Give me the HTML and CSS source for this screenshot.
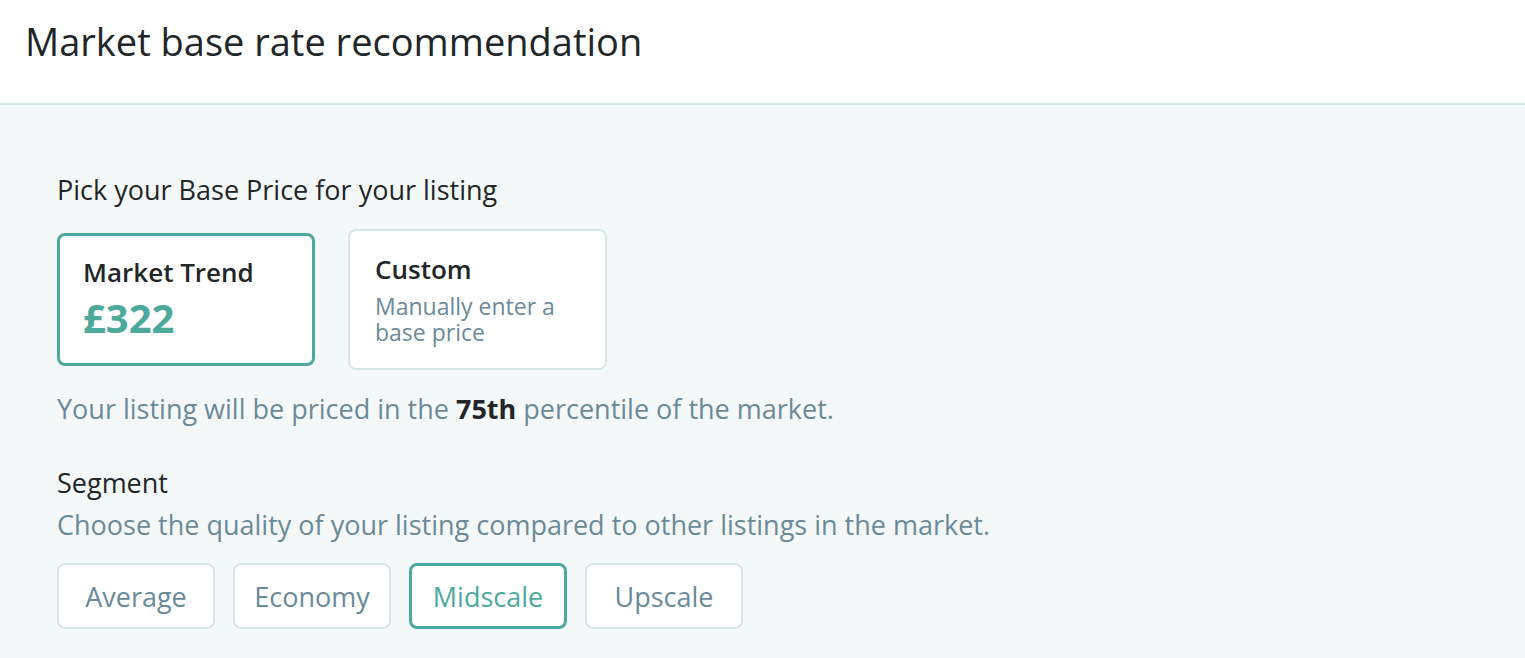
FILE: index.html
```html
<!DOCTYPE html>
<html lang="en">
<head>
  <meta charset="UTF-8" />
  <title>Market base rate recommendation</title>
  <link rel="stylesheet" href="styles.css">
</head>
<body>
  <header class="page-header">
    <h1>Market base rate recommendation</h1>
  </header>

  <main class="content">
    <section class="base-price">
      <p class="label">Pick your Base Price for your listing</p>
      <div class="price-options">
        <button class="price-card selected">
          <span class="card-title">Market Trend</span>
          <span class="card-price">£322</span>
        </button>
        <button class="price-card">
          <span class="card-title">Custom</span>
          <span class="card-note">Manually enter a base price</span>
        </button>
      </div>
      <p class="hint">Your listing will be priced in the <strong>75th</strong> percentile of the market.</p>
    </section>

    <section class="segment">
      <p class="label">Segment</p>
      <p class="hint">Choose the quality of your listing compared to other listings in the market.</p>
      <div class="segment-options">
        <button class="segment-btn">Average</button>
        <button class="segment-btn">Economy</button>
        <button class="segment-btn selected">Midscale</button>
        <button class="segment-btn">Upscale</button>
      </div>
    </section>
  </main>
</body>
</html>
```

FILE: styles.css
```css
* {
  margin: 0;
  padding: 0;
  box-sizing: border-box;
}
body, html {
  height: 100%;
  overflow: hidden;
}
body {
  font-family: 'Open Sans', 'Noto Sans', sans-serif;
  background: #f5f8f8;
  color: #222629;
}

.page-header {
  background: #fff;
  height: 105px;
  border-bottom: 2px solid #d7e5e5;
  padding: 15px 25px 0;
}
.page-header h1 {
  font-size: 38px;
  font-weight: 400;
  line-height: 52px;
}

.content {
  padding: 67px 57px 0;
}

.label {
  font-size: 27px;
  line-height: 36px;
  font-weight: 500;
}

.hint {
  font-size: 27px;
  line-height: 36px;
  color: #6a8a99;
}
.hint strong {
  color: #222629;
  font-weight: 700;
}

.price-options {
  display: flex;
  gap: 33px;
  margin: 21px 0;
  align-items: center;
}

.price-card {
  font-family: inherit;
  background: #fff;
  border: 2px solid #d6e6e6;
  border-radius: 8px;
  width: 259px;
  height: 141px;
  padding: 21px 25px;
  display: flex;
  flex-direction: column;
  align-items: flex-start;
  text-align: left;
  cursor: pointer;
}
.price-card.selected {
  width: 258px;
  height: 133px;
  border: 3px solid #4ea99d;
  padding: 19px 23px;
}

.card-title {
  font-size: 26px;
  font-weight: 600;
  line-height: 34px;
  color: #222629;
}
.card-price {
  font-size: 40px;
  font-weight: 700;
  line-height: 46px;
  color: #4ea99d;
  margin-top: 6px;
}
.card-note {
  font-size: 23px;
  line-height: 26px;
  color: #6a8a99;
  margin-top: 7px;
}

.segment {
  margin-top: 38px;
}
.segment .hint {
  margin-top: 6px;
}

.segment-options {
  display: flex;
  gap: 18px;
  margin-top: 20px;
}

.segment-btn {
  font-family: inherit;
  font-size: 27px;
  font-weight: 400;
  color: #6a8a99;
  background: #fff;
  border: 2px solid #d6e6e6;
  border-radius: 8px;
  width: 158px;
  height: 66px;
  cursor: pointer;
}
.segment-btn.selected {
  border: 3px solid #4ea99d;
  color: #4ea99d;
}
```
